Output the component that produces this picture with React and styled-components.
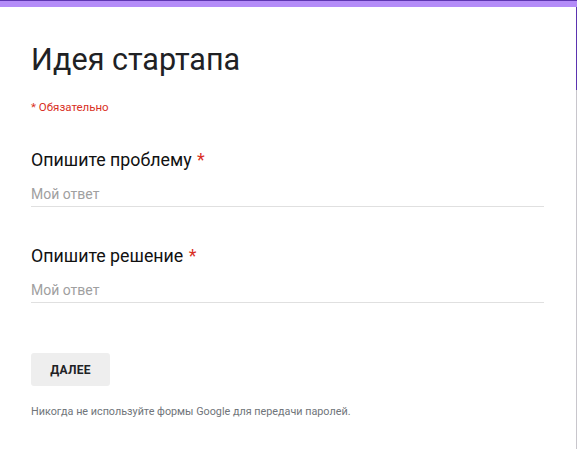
import React from "react";
import styled, { createGlobalStyle } from "styled-components";

const Global = createGlobalStyle`
  html, body { margin: 0; padding: 0; background: #fff; }
  body { font-family: Roboto, "Noto Sans", Arial, sans-serif; }
`;

const Page = styled.div`
  position: relative;
  width: 577px;
  height: 449px;
  overflow: hidden;
  background:
    linear-gradient(#5b34b0, #5b34b0) right top / 1px 90px no-repeat,
    linear-gradient(#c8c6cc, #c8c6cc) right top / 1px 100% no-repeat,
    #fff;
`;

const TopBand = styled.div`
  height: 6px;
  border-top: 1px solid #5e35b1;
  background: #b48cf8;
`;

const Content = styled.div`
  padding: 35px 33px 0 31px;
`;

const Title = styled.h1`
  margin: 0;
  font-size: 30.5px;
  font-weight: 400;
  line-height: 36px;
  color: #202124;
`;

const Required = styled.div`
  margin-top: 22px;
  font-size: 11.5px;
  line-height: 14px;
  color: #d93025;
`;

const Question = styled.div`
  margin-top: ${(p) => p.$top}px;
`;

const Label = styled.div`
  font-size: 17.8px;
  line-height: 24px;
  color: #111;
`;

const Star = styled.span`
  color: #d93025;
  margin-left: 1px;
`;

const Answer = styled.div`
  margin-top: 12px;
  padding-bottom: 2px;
  border-bottom: 1px solid #e0e0e0;
  font-size: 14px;
  line-height: 20px;
  color: #a0a0a0;
`;

const Button = styled.button`
  display: block;
  margin-top: 50px;
  width: 79px;
  height: 33px;
  border: none;
  border-radius: 3px;
  background: #eeeeee;
  font-family: Roboto, Arial, sans-serif;
  font-size: 12px;
  font-weight: 700;
  letter-spacing: 0.3px;
  color: #202124;
  padding: 0;
`;

const Footer = styled.div`
  margin-top: 19px;
  font-size: 10.8px;
  line-height: 14px;
  color: #70757a;
`;

export default function App() {
  return (
    <>
      <Global />
      <Page>
        <TopBand />
        <Content>
          <Title>Идея стартапа</Title>
          <Required>* Обязательно</Required>
          <Question $top={34}>
            <Label>
              Опишите проблему <Star>*</Star>
            </Label>
            <Answer>Мой ответ</Answer>
          </Question>
          <Question $top={37}>
            <Label>
              Опишите решение <Star>*</Star>
            </Label>
            <Answer>Мой ответ</Answer>
          </Question>
          <Button>ДАЛЕЕ</Button>
          <Footer>Никогда не используйте формы Google для передачи паролей.</Footer>
        </Content>
      </Page>
    </>
  );
}
